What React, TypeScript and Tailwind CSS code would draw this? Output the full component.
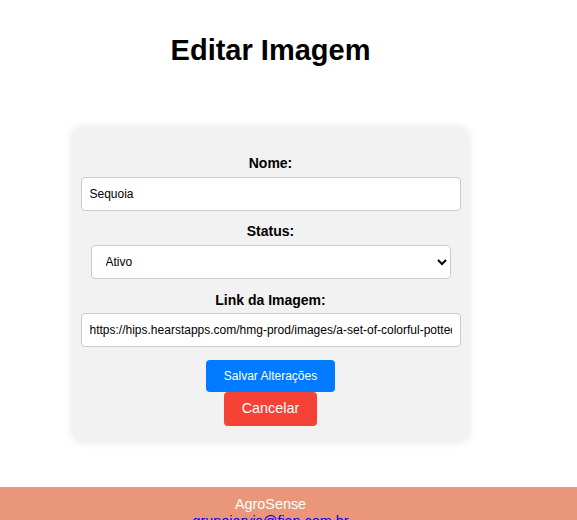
import React from "react";

const font = { fontFamily: '"Liberation Sans", Arial, sans-serif' };

function Field({
  label,
  children,
  top,
}: {
  label: string;
  children: React.ReactNode;
  top: string;
}) {
  return (
    <div className={`flex flex-col items-center w-full ${top}`}>
      <label className="text-[14px] leading-[16px] font-bold text-black mb-[6px]">
        {label}
      </label>
      {children}
    </div>
  );
}

export default function App() {
  return (
    <div className="min-h-screen bg-white" style={font}>
      <main className="w-[541px] flex flex-col items-center pb-[45px]">
        <h1 className="text-[29px] leading-[32px] font-bold text-black mt-[34px]">
          Editar Imagem
        </h1>
        <form className="mt-[61px] w-[397px] bg-[#f2f2f2] rounded-[10px] shadow-[0_0_10px_rgba(0,0,0,0.1)] pt-[28px] pb-[16px] px-[9px] flex flex-col items-center">
          <Field label="Nome:" top="mt-0">
            <input
              type="text"
              defaultValue="Sequoia"
              className="w-[380px] h-[34px] px-[8px] bg-white border border-[#cccccc] rounded-[4px] text-[12px] text-black outline-none"
            />
          </Field>
          <Field label="Status:" top="mt-[12px]">
            <select
              defaultValue="ativo"
              className="w-[360px] h-[34px] pl-[10px] pr-[6px] bg-white border border-[#cccccc] rounded-[4px] text-[12px] text-black outline-none"
            >
              <option value="ativo">Ativo</option>
              <option value="inativo">Inativo</option>
            </select>
          </Field>
          <Field label="Link da Imagem:" top="mt-[13px]">
            <input
              type="text"
              defaultValue="https://hips.hearstapps.com/hmg-prod/images/a-set-of-colorful-potted-plants.jpg"
              className="w-[380px] h-[34px] px-[8px] bg-white border border-[#cccccc] rounded-[4px] text-[12px] text-black outline-none -mt-[1px]"
            />
          </Field>
          <button
            type="submit"
            className="mt-[13px] w-[129px] h-[32px] bg-[#007bff] text-white text-[12px] rounded-[4px]"
          >
            Salvar Alterações
          </button>
          <button
            type="button"
            className="w-[93px] h-[34px] bg-[#f44336] text-white text-[14.4px] rounded-[4px]"
          >
            Cancelar
          </button>
        </form>
      </main>
      <footer className="bg-[#e9967a] pt-[9px] pb-[10px]">
        <div className="w-[541px] flex flex-col items-center text-[14.4px] leading-[17px]">
          <p className="text-white">AgroSense</p>
          <a href="#" className="text-[#0000ee] underline">
            grupojarvis@fiap.com.br
          </a>
        </div>
      </footer>
    </div>
  );
}
